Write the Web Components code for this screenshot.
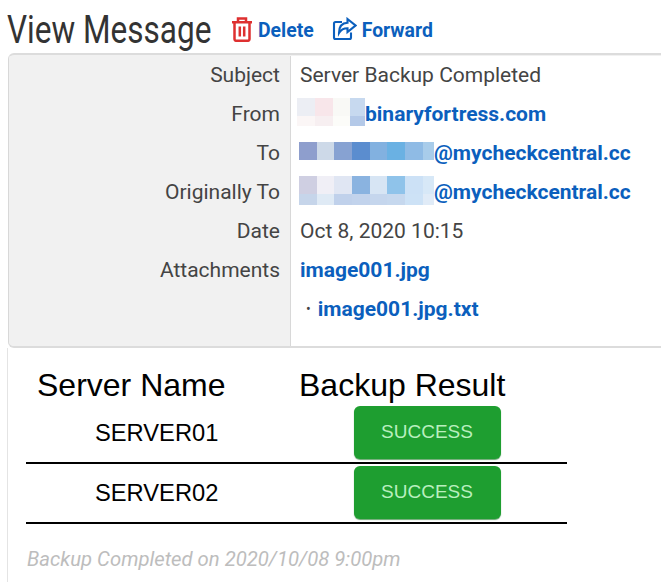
<!DOCTYPE html>
<html>
<head>
<meta charset="utf-8">
<title>View Message</title>
<style>
    html, body { margin: 0; padding: 0; background: #fff; overflow: hidden; }
    body { width: 661px; height: 582px; font-family: Roboto, "Liberation Sans", sans-serif; color: #333; }
</style>
</head>
<body>
<message-page></message-page>

<script>
function elementFromHTML(html) {
    const template = document.createElement('template');
    template.innerHTML = html.trim();
    return template.content;
}

const ICONS = {
    trash: `<svg width="22" height="25" viewBox="0 0 22 25" fill="none" stroke="#de3030" stroke-width="2.500">
        <path d="M1 5.200h20M7 5V1.500h8V5M3.500 5v17a1.800 1.800 0 0 0 1.800 1.800h11.400a1.800 1.800 0 0 0 1.800-1.800V5"/>
        <path d="M8.800 9.500v10M13.200 9.500v10"/></svg>`,
    forward: `<svg width="25" height="24" viewBox="0 0 25 24" fill="none" stroke="#0b5fbd" stroke-width="2.100">
        <path d="M10 5H3.500a1.500 1.500 0 0 0-1.500 1.500v14a1.500 1.500 0 0 0 1.500 1.500h14a1.500 1.500 0 0 0 1.500-1.500v-5"/>
        <path d="M15.500 2l8 6.500-8 6.500v-3.800c-4.500 0-6.500 1.300-8.500 4.800 0-6 3-10 8.500-10.200z"/></svg>`
};

customElements.define("action-link", class extends HTMLElement {
    constructor() {
        super();
        const shadowRoot = this.attachShadow({ mode: "open" });
        shadowRoot.appendChild(elementFromHTML(`
            <style>
                :host { display: inline-flex; align-items: center; gap: 5px; color: #0b5fbd; font: 700 19.400px Roboto, sans-serif; }
                svg { display: block; }
                span { padding-bottom: 2px; }
            </style>
            <span id="icon"></span><slot></slot>
        `).cloneNode(true));
    }

    connectedCallback() {
        this.shadowRoot.getElementById("icon").innerHTML = ICONS[this.getAttribute("icon")];
    }
});

customElements.define("detail-row", class extends HTMLElement {
    constructor() {
        super();
        const shadowRoot = this.attachShadow({ mode: "open" });
        shadowRoot.appendChild(elementFromHTML(`
            <style>
                :host { display: grid; grid-template-columns: 282px 1fr; height: 39px; }
                .label { background: #f1f1f1; border-right: 1px solid #d8d8d8; padding-right: 10px; text-align: right;
                         line-height: 39px; font-size: 21px; color: #444; }
                .value { padding-left: 9px; padding-bottom: 1px; display: flex; align-items: center; font-size: 21px; color: #444; white-space: nowrap; }
            </style>
            <div class="label"><slot name="label"></slot></div>
            <div class="value"><slot></slot></div>
        `).cloneNode(true));
    }
});

// blurred out part of an address: rows of colored blocks
customElements.define("pixel-block", class extends HTMLElement {
    constructor() {
        super();
        const shadowRoot = this.attachShadow({ mode: "open" });
        shadowRoot.appendChild(elementFromHTML(`
            <style>
                :host { display: inline-grid; flex: none; margin-bottom: 4px; }
                i { display: block; }
            </style>
        `).cloneNode(true));
    }

    connectedCallback() {
        var rows = this.getAttribute("colors").split("|").map(r => r.split(","));
        this.style.gridTemplateColumns = this.getAttribute("widths");
        this.style.gridTemplateRows = this.getAttribute("heights");
        rows.flat().forEach(c => {
            var cell = document.createElement("i");
            cell.style.background = c;
            this.shadowRoot.appendChild(cell);
        });
    }
});

customElements.define("mail-link", class extends HTMLElement {
    constructor() {
        super();
        const shadowRoot = this.attachShadow({ mode: "open" });
        shadowRoot.appendChild(elementFromHTML(`
            <style>
                :host { display: inline; color: #0b5fbd; font-weight: 700; font-size: 21px; }
            </style>
            <slot></slot>
        `).cloneNode(true));
    }
});

customElements.define("status-badge", class extends HTMLElement {
    constructor() {
        super();
        const shadowRoot = this.attachShadow({ mode: "open" });
        shadowRoot.appendChild(elementFromHTML(`
            <style>
                :host { display: flex; align-items: center; justify-content: center; width: 147px; height: 53px; box-sizing: border-box;
                        padding: 0 1px 1px 0; background: #1e9e30; border-radius: 6px; box-shadow: 0 1px 1px #6aa872;
                        color: #b9efbf; font: 19px "Liberation Sans", sans-serif; }
            </style>
            <slot></slot>
        `).cloneNode(true));
    }
});

customElements.define("server-row", class extends HTMLElement {
    constructor() {
        super();
        const shadowRoot = this.attachShadow({ mode: "open" });
        shadowRoot.appendChild(elementFromHTML(`
            <style>
                :host { display: grid; grid-template-columns: 328px 147px; height: 56px; border-bottom: 2px solid #000; align-items: center;
                        width: 541px; color: #000; font: 23.700px "Liberation Sans", sans-serif; }
                .name { padding-left: 69px; padding-bottom: 2px; }
                status-badge { align-self: start; }
            </style>
            <div class="name"><slot name="name"></slot></div>
            <status-badge>SUCCESS</status-badge>
        `).cloneNode(true));
    }
});

customElements.define("message-details", class extends HTMLElement {
    constructor() {
        super();
        const shadowRoot = this.attachShadow({ mode: "open" });
        shadowRoot.appendChild(elementFromHTML(`
            <style>
                :host { display: block; margin-left: 8px; border-top: 2px solid #dcdcdc; border-bottom: 2px solid #dcdcdc;
                        border-left: 1px solid #d8d8d8; border-top-left-radius: 6px; border-bottom-left-radius: 6px; overflow: hidden; padding-top: 1px; background: #f1f1f1; }
                .bg { padding-bottom: 17px; background: linear-gradient(to right, #f1f1f1 281px, #d8d8d8 281px, #d8d8d8 282px, #fff 282px); }
                .addr { display: flex; align-items: center; }
                .bullet { margin: 0 7px 0 6px; font-size: 14px; }
            </style>
            <div class="bg">
                <detail-row><span slot="label">Subject</span>Server Backup Completed</detail-row>
                <detail-row><span slot="label">From</span>
                    <span class="addr" style="margin-left:-3px">
                        <pixel-block widths="18px 18px 17px 15px" heights="18px 10px" style="width:68px;height:28px"
                            colors="#eceef4,#f8e6ea,#f9f9f6,#c7d9ef|#fbf6f6,#f7eff1,#fcfcf9,#b4c9e8"></pixel-block>
                        <mail-link>binaryfortress.com</mail-link>
                    </span></detail-row>
                <detail-row><span slot="label">To</span>
                    <span class="addr" style="margin-left:-1px">
                        <pixel-block widths="18px 17px 18px 18px 17px 18px 18px 11px" heights="18px" style="width:135px;height:18px"
                            colors="#8e9ecd,#cdd9e8,#87a2d2,#5b8dcf,#82b1e0,#6ab1e3,#8fbbe5,#a8ccea"></pixel-block>
                        <mail-link>@mycheckcentral.cc</mail-link>
                    </span></detail-row>
                <detail-row><span slot="label">Originally To</span>
                    <span class="addr" style="margin-left:-1px">
                        <pixel-block widths="18px 17px 18px 18px 17px 18px 18px 11px" heights="18px 11px" style="width:135px;height:29px"
                            colors="#cfcfe2,#f0eff6,#e0e6f3,#8ab3e0,#d7e5f4,#8fc3ea,#cce1f6,#d7e8f7|#c6d5ea,#dfeaf5,#c0d1eb,#c2d3ec,#c5d6ed,#c6d8ee,#cde2f6,#e0ebf7"></pixel-block>
                        <mail-link>@mycheckcentral.cc</mail-link>
                    </span></detail-row>
                <detail-row><span slot="label">Date</span>Oct 8, 2020 10:15</detail-row>
                <detail-row><span slot="label">Attachments</span><mail-link>image001.jpg</mail-link></detail-row>
                <detail-row><span slot="label"></span><span class="bullet">•</span><mail-link>image001.jpg.txt</mail-link></detail-row>
            </div>
        `).cloneNode(true));
    }
});

customElements.define("backup-report", class extends HTMLElement {
    constructor() {
        super();
        const shadowRoot = this.attachShadow({ mode: "open" });
        shadowRoot.appendChild(elementFromHTML(`
            <style>
                :host { display: block; margin-left: 7px; border-left: 1px solid #e4e4e4; padding-left: 18px; height: 240px; }
                .head { display: flex; padding: 19px 0 0 11px; height: 39px; color: #000; font: 32px/36px "Liberation Sans", sans-serif; white-space: nowrap; }
                .head span:first-child { width: 262px; }
                .foot { margin: 23px 0 0 1px; color: #bdbdbd; font: italic 20.300px Roboto, sans-serif; }
            </style>
            <div class="head"><span>Server Name</span><span>Backup Result</span></div>
            <server-row><span slot="name">SERVER01</span></server-row>
            <server-row style="padding-top:2px"><span slot="name">SERVER02</span></server-row>
            <div class="foot">Backup Completed on 2020/10/08 9:00pm</div>
        `).cloneNode(true));
    }
});

customElements.define("message-page", class extends HTMLElement {
    constructor() {
        super();
        const shadowRoot = this.attachShadow({ mode: "open" });
        shadowRoot.appendChild(elementFromHTML(`
            <style>
                :host { display: block; }
                header { display: flex; align-items: center; height: 53px; padding-left: 7px; padding-top: 7px; box-sizing: border-box; }
                h1 { margin: 0; width: 224px; flex: none; font: 400 38px Roboto, sans-serif; color: #333; white-space: nowrap;
                     transform: scaleX(.83); transform-origin: left center; }
                action-link + action-link { margin-left: 18px; }
            </style>
            <header>
                <h1>View Message</h1>
                <action-link icon="trash">Delete</action-link>
                <action-link icon="forward">Forward</action-link>
            </header>
            <message-details></message-details>
            <backup-report></backup-report>
        `).cloneNode(true));
    }
});
</script>
</body>
</html>
